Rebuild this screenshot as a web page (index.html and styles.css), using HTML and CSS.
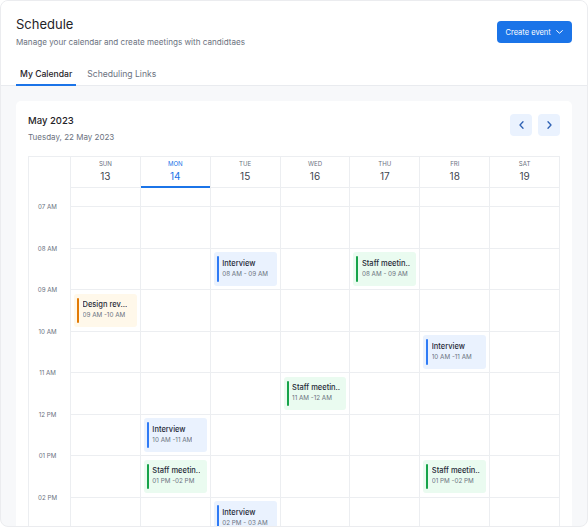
FILE: index.html
```html
<!DOCTYPE html>
<html lang="en">
<head>
<meta charset="utf-8">
<title>Schedule</title>
<link rel="stylesheet" href="styles.css">
</head>
<body>
<div class="app">
  <header class="header">
    <div class="header-top">
      <div class="heading">
        <h1 class="title">Schedule</h1>
        <p class="subtitle">Manage your calendar and create meetings with candidtaes</p>
      </div>
      <button class="btn-primary">Create event
        <svg class="btn-chevron" width="7" height="4" viewBox="0 0 7 4"><path d="M0.6 0.6 L3.5 3.2 L6.4 0.6" fill="none" stroke="#fff" stroke-width="1" stroke-linecap="round" stroke-linejoin="round"/></svg>
      </button>
    </div>
    <nav class="tabs">
      <span class="tab active">My Calendar</span>
      <span class="tab">Scheduling Links</span>
    </nav>
  </header>
  <main class="main">
    <section class="card">
      <div class="card-head">
        <div>
          <div class="month">May 2023</div>
          <div class="date">Tuesday, 22 May 2023</div>
        </div>
        <div class="nav">
          <button class="nav-btn"><svg width="5" height="8" viewBox="0 0 5 8"><path d="M4 0.8 L1 4 L4 7.2" fill="none" stroke="#2f62b4" stroke-width="1.3" stroke-linecap="round" stroke-linejoin="round"/></svg></button>
          <button class="nav-btn"><svg width="5" height="8" viewBox="0 0 5 8"><path d="M1 0.8 L4 4 L1 7.2" fill="none" stroke="#2f62b4" stroke-width="1.3" stroke-linecap="round" stroke-linejoin="round"/></svg></button>
        </div>
      </div>
      <div class="grid">
        <div class="time-col">
          <div class="time-spacer"></div>
          <div class="time">07 AM</div>
          <div class="time">08 AM</div>
          <div class="time">09 AM</div>
          <div class="time">10 AM</div>
          <div class="time">11 AM</div>
          <div class="time">12 PM</div>
          <div class="time">01 PM</div>
          <div class="time">02 PM</div>
        </div>

        <div class="day">
          <div class="day-head"><span class="dname">SUN</span><span class="dnum">13</span></div>
          <div class="spacer"></div>
          <div class="cell"></div>
          <div class="cell"></div>
          <div class="cell"><div class="event orange"><i class="bar"></i><div class="ev-text"><div class="ev-title">Design rev...</div><div class="ev-time">09 AM -10 AM</div></div></div></div>
          <div class="cell"></div>
          <div class="cell"></div>
          <div class="cell"></div>
          <div class="cell"></div>
          <div class="cell"></div>
        </div>

        <div class="day today">
          <div class="day-head"><span class="dname">MON</span><span class="dnum">14</span></div>
          <div class="spacer"></div>
          <div class="cell"></div>
          <div class="cell"></div>
          <div class="cell"></div>
          <div class="cell"></div>
          <div class="cell"></div>
          <div class="cell"><div class="event blue"><i class="bar"></i><div class="ev-text"><div class="ev-title">Interview</div><div class="ev-time">10 AM -11 AM</div></div></div></div>
          <div class="cell"><div class="event green"><i class="bar"></i><div class="ev-text"><div class="ev-title">Staff meetin..</div><div class="ev-time">01 PM -02 PM</div></div></div></div>
          <div class="cell"></div>
        </div>

        <div class="day">
          <div class="day-head"><span class="dname">TUE</span><span class="dnum">15</span></div>
          <div class="spacer"></div>
          <div class="cell"></div>
          <div class="cell"><div class="event blue"><i class="bar"></i><div class="ev-text"><div class="ev-title">Interview</div><div class="ev-time">08 AM - 09 AM</div></div></div></div>
          <div class="cell"></div>
          <div class="cell"></div>
          <div class="cell"></div>
          <div class="cell"></div>
          <div class="cell"></div>
          <div class="cell"><div class="event blue"><i class="bar"></i><div class="ev-text"><div class="ev-title">Interview</div><div class="ev-time">02 PM - 03 AM</div></div></div></div>
        </div>

        <div class="day">
          <div class="day-head"><span class="dname">WED</span><span class="dnum">16</span></div>
          <div class="spacer"></div>
          <div class="cell"></div>
          <div class="cell"></div>
          <div class="cell"></div>
          <div class="cell"></div>
          <div class="cell"><div class="event green"><i class="bar"></i><div class="ev-text"><div class="ev-title">Staff meetin..</div><div class="ev-time">11 AM -12 AM</div></div></div></div>
          <div class="cell"></div>
          <div class="cell"></div>
          <div class="cell"></div>
        </div>

        <div class="day">
          <div class="day-head"><span class="dname">THU</span><span class="dnum">17</span></div>
          <div class="spacer"></div>
          <div class="cell"></div>
          <div class="cell"><div class="event green"><i class="bar"></i><div class="ev-text"><div class="ev-title">Staff meetin..</div><div class="ev-time">08 AM - 09 AM</div></div></div></div>
          <div class="cell"></div>
          <div class="cell"></div>
          <div class="cell"></div>
          <div class="cell"></div>
          <div class="cell"></div>
          <div class="cell"></div>
        </div>

        <div class="day">
          <div class="day-head"><span class="dname">FRI</span><span class="dnum">18</span></div>
          <div class="spacer"></div>
          <div class="cell"></div>
          <div class="cell"></div>
          <div class="cell"></div>
          <div class="cell"><div class="event blue"><i class="bar"></i><div class="ev-text"><div class="ev-title">Interview</div><div class="ev-time">10 AM -11 AM</div></div></div></div>
          <div class="cell"></div>
          <div class="cell"></div>
          <div class="cell"><div class="event green"><i class="bar"></i><div class="ev-text"><div class="ev-title">Staff meetin..</div><div class="ev-time">01 PM -02 PM</div></div></div></div>
          <div class="cell"></div>
        </div>

        <div class="day">
          <div class="day-head"><span class="dname">SAT</span><span class="dnum">19</span></div>
          <div class="spacer"></div>
          <div class="cell"></div>
          <div class="cell"></div>
          <div class="cell"></div>
          <div class="cell"></div>
          <div class="cell"></div>
          <div class="cell"></div>
          <div class="cell"></div>
          <div class="cell"></div>
        </div>
      </div>
    </section>
  </main>
</div>
</body>
</html>
```
FILE: styles.css
```css
* { box-sizing: border-box; }
html, body { margin: 0; padding: 0; background: #ffffff; }
body { font-family: Inter, "Noto Sans", sans-serif; color: #1f2328; }

.app {
  width: 588px;
  height: 527px;
  border: 1px solid #ebecef;
  border-radius: 8px;
  overflow: hidden;
  display: flex;
  flex-direction: column;
  background: #f7f8fa;
}

.header {
  background: #ffffff;
  padding: 15px 15px 0 15px;
  border-bottom: 1px solid #e9ebef;
  flex: 0 0 auto;
}
.header-top { display: flex; justify-content: space-between; align-items: flex-start; }
.title { margin: 0; font-size: 13px; line-height: 16px; font-weight: 400; color: #1f2328; }
.subtitle { margin: 4px 0 0; font-size: 8.1px; line-height: 12px; color: #6b7280; }

.btn-primary {
  margin-top: 5px;
  height: 22px;
  width: 75px;
  padding: 0 9px 0 8.5px;
  border: none;
  border-radius: 4px;
  background: #1b74e8;
  color: #ffffff;
  font-family: Inter, sans-serif;
  font-size: 7.5px;
  display: flex;
  align-items: center;
  justify-content: space-between;
}
.btn-chevron { display: block; }

.tabs { display: flex; gap: 7px; margin-top: 20px; margin-bottom: -1px; }
.tab {
  font-size: 8.6px;
  line-height: 12px;
  padding: 0 4px 4px;
  border-bottom: 2px solid transparent;
  color: #6b7280;
}
.tab.active { color: #1f2328; font-weight: 500; border-bottom-color: #1b74e8; }

.main { flex: 1 1 auto; min-height: 0; padding: 15px 15px 0; overflow: hidden; }
.card {
  background: #ffffff;
  border-radius: 5px 5px 0 0;
  padding: 13px 12px 0;
  height: 100%;
  overflow: hidden;
}
.card-head { display: flex; justify-content: space-between; align-items: flex-start; }
.month { font-size: 9.5px; line-height: 13px; font-weight: 500; color: #1f2328; }
.date { margin-top: 4px; font-size: 8px; line-height: 12px; color: #6b7280; }
.nav { display: flex; gap: 6px; }
.nav-btn {
  width: 22px; height: 22px;
  border: none; border-radius: 4px;
  background: #eaf2fe;
  display: flex; align-items: center; justify-content: center;
  padding: 0;
}
.nav-btn svg { display: block; }

.grid {
  margin-top: 13px;
  display: flex;
  border-top: 1px solid #eceef1;
  border-left: 1px solid #eceef1;
}
.time-col { flex: 0 0 42px; border-right: 1px solid #eceef1; }
.time-spacer { height: 28.75px; }
.time {
  height: 41.5px;
  display: flex; align-items: center; justify-content: center;
  padding-right: 4px;
  font-size: 6.2px;
  color: #6b7280;
}
.day { flex: 1 1 0; min-width: 0; border-right: 1px solid #eceef1; }
.day-head {
  height: 31px;
  border-bottom: 1px solid #eceef1;
  display: flex; flex-direction: column; align-items: center;
  padding-top: 3px;
}
.dname { font-size: 6.1px; line-height: 8px; color: #6b7280; }
.dnum { margin-top: 2px; font-size: 10px; line-height: 12px; color: #3f4650; }
.today .day-head { border-bottom: 2px solid #1b74e8; }
.today .dname, .today .dnum { color: #1b74e8; }
.spacer { height: 19px; border-bottom: 1px solid #eceef1; }
.cell { height: 41.5px; border-bottom: 1px solid #eceef1; padding: 3.5px 3px; display: flex; }

.event {
  flex: 1 1 auto;
  min-width: 0;
  border-radius: 3px;
  padding: 4px 3px;
  display: flex;
}
.bar { display: block; flex: 0 0 2px; border-radius: 1px; }
.ev-text { margin-left: 3.5px; padding-top: 2.5px; min-width: 0; overflow: hidden; }
.ev-title { font-size: 7.5px; line-height: 10px; font-weight: 500; color: #1f2937; white-space: nowrap; overflow: hidden; }
.ev-time { margin-top: 1px; font-size: 6.3px; line-height: 9px; color: #6b7280; white-space: nowrap; }

.blue { background: #eaf2fe; }
.blue .bar { background: #2f7bf5; }
.green { background: #eafbf0; }
.green .bar { background: #17a34a; }
.orange { background: #fff8ea; }
.orange .bar { background: #e27a05; }
```
